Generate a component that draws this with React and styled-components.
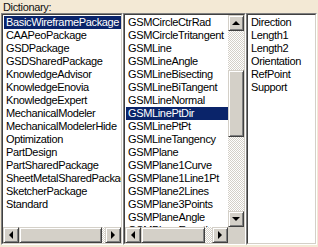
import styled, { createGlobalStyle } from "styled-components";

const packages = [
  "BasicWireframePackage",
  "CAAPeoPackage",
  "GSDPackage",
  "GSDSharedPackage",
  "KnowledgeAdvisor",
  "KnowledgeEnovia",
  "KnowledgeExpert",
  "MechanicalModeler",
  "MechanicalModelerHide",
  "Optimization",
  "PartDesign",
  "PartSharedPackage",
  "SheetMetalSharedPackage",
  "SketcherPackage",
  "Standard",
];

const types = [
  "GSMCircleCtrRad",
  "GSMCircleTritangent",
  "GSMLine",
  "GSMLineAngle",
  "GSMLineBisecting",
  "GSMLineBiTangent",
  "GSMLineNormal",
  "GSMLinePtDir",
  "GSMLinePtPt",
  "GSMLineTangency",
  "GSMPlane",
  "GSMPlane1Curve",
  "GSMPlane1Line1Pt",
  "GSMPlane2Lines",
  "GSMPlane3Points",
  "GSMPlaneAngle",
  "GSMPlaneEquation",
];

const attributes = ["Direction", "Length1", "Length2", "Orientation", "RefPoint", "Support"];

function Arrow({ dir }) {
  return (
    <ScrollButton>
      <Tri $dir={dir} />
    </ScrollButton>
  );
}

function HScroll({ thumb }) {
  return (
    <HBar>
      <Arrow dir="left" />
      <HTrack>
        <HThumb $w={thumb} />
      </HTrack>
      <Arrow dir="right" />
    </HBar>
  );
}

function VScroll({ top, thumb }) {
  return (
    <VBar>
      <Arrow dir="up" />
      <VTrack>
        <VThumb $top={top} $h={thumb} />
      </VTrack>
      <Arrow dir="down" />
    </VBar>
  );
}

function List({ items, selected, width, hThumb, vScroll }) {
  return (
    <ListFrame $w={width}>
      <ListInner $v={!!vScroll} $h={!!hThumb}>
        <Items>
          {items.map((it) => (
            <Item key={it} $sel={it === selected}>
              {it}
            </Item>
          ))}
        </Items>
        {vScroll && <VScroll top={vScroll.top} thumb={vScroll.thumb} />}
        {hThumb && <HScroll thumb={hThumb} />}
        {vScroll && hThumb && <Corner />}
      </ListInner>
    </ListFrame>
  );
}

export default function App() {
  return (
    <>
      <GlobalStyle />
      <Panel>
        <Caption>Dictionary:</Caption>
        <Lists>
          <List items={packages} selected="BasicWireframePackage" width={122} hThumb={83} />
          <List
            items={types}
            selected="GSMLinePtDir"
            width={123}
            hThumb={64}
            vScroll={{ top: 39, thumb: 67 }}
          />
          <List items={attributes} width={71} />
        </Lists>
      </Panel>
    </>
  );
}

const GlobalStyle = createGlobalStyle`
  html, body {
    margin: 0;
    padding: 0;
    background: #f3e9d5;
  }
  body {
    font-family: "Liberation Sans", Arial, sans-serif;
    font-size: 11px;
    letter-spacing: -0.35px;
    color: #000;
  }
`;

const Panel = styled.div`
  width: 318px;
  height: 247px;
  box-sizing: border-box;
  padding: 2px 1px 2px 1px;
  display: flex;
  flex-direction: column;
`;

const Caption = styled.div`
  height: 11px;
  line-height: 11px;
  padding-left: 2px;
  color: #111;
`;

const Lists = styled.div`
  flex: 1;
  display: flex;
  min-height: 0;
`;

const ListFrame = styled.div`
  width: ${(p) => p.$w}px;
  box-sizing: border-box;
  border: 1px solid;
  border-color: #808080 #fff #fff #808080;
`;

const ListInner = styled.div`
  height: 100%;
  box-sizing: border-box;
  border: 1px solid;
  border-color: #404040 #d4d0c8 #d4d0c8 #404040;
  background: #fff;
  display: grid;
  grid-template-columns: ${(p) => (p.$v ? "1fr 16px" : "1fr")};
  grid-template-rows: ${(p) => (p.$h ? "1fr 16px" : "1fr")};
  overflow: hidden;
`;

const Items = styled.div`
  overflow: hidden;
  padding: 1px 0 0 1px;
  min-width: 0;
`;

const Item = styled.div`
  height: 13px;
  line-height: 13px;
  padding-left: 2px;
  white-space: nowrap;
  background: ${(p) => (p.$sel ? "#0a246a" : "transparent")};
  color: ${(p) => (p.$sel ? "#fff" : "#000")};
`;

const checker = `repeating-conic-gradient(#d4d0c8 0 25%, #fff 0 50%) 0 0 / 2px 2px`;

const HBar = styled.div`
  display: flex;
  height: 16px;
`;

const VBar = styled.div`
  display: flex;
  flex-direction: column;
  width: 16px;
`;

const HTrack = styled.div`
  flex: 1;
  display: flex;
  background: ${checker};
`;

const VTrack = styled.div`
  flex: 1;
  display: flex;
  flex-direction: column;
  background: ${checker};
`;

const raised = `
  box-sizing: border-box;
  background: #d4d0c8;
  border: 1px solid;
  border-color: #d4d0c8 #404040 #404040 #d4d0c8;
  box-shadow: inset 1px 1px #fff, inset -1px -1px #808080;
`;

const HThumb = styled.div`
  ${raised}
  width: ${(p) => p.$w}px;
  height: 16px;
`;

const VThumb = styled.div`
  ${raised}
  width: 16px;
  height: ${(p) => p.$h}px;
  margin-top: ${(p) => p.$top}px;
`;

const ScrollButton = styled.div`
  ${raised}
  width: 16px;
  height: 16px;
  flex: none;
  display: flex;
  align-items: center;
  justify-content: center;
`;

const Tri = styled.div`
  width: 0;
  height: 0;
  border-style: solid;
  ${(p) =>
    p.$dir === "up"
      ? "border-width: 0 4px 4px 4px; border-color: transparent transparent #000 transparent;"
      : p.$dir === "down"
      ? "border-width: 4px 4px 0 4px; border-color: #000 transparent transparent transparent;"
      : p.$dir === "left"
      ? "border-width: 4px 4px 4px 0; border-color: transparent #000 transparent transparent;"
      : "border-width: 4px 0 4px 4px; border-color: transparent transparent transparent #000;"}
`;

const Corner = styled.div`
  background: #d4d0c8;
`;
